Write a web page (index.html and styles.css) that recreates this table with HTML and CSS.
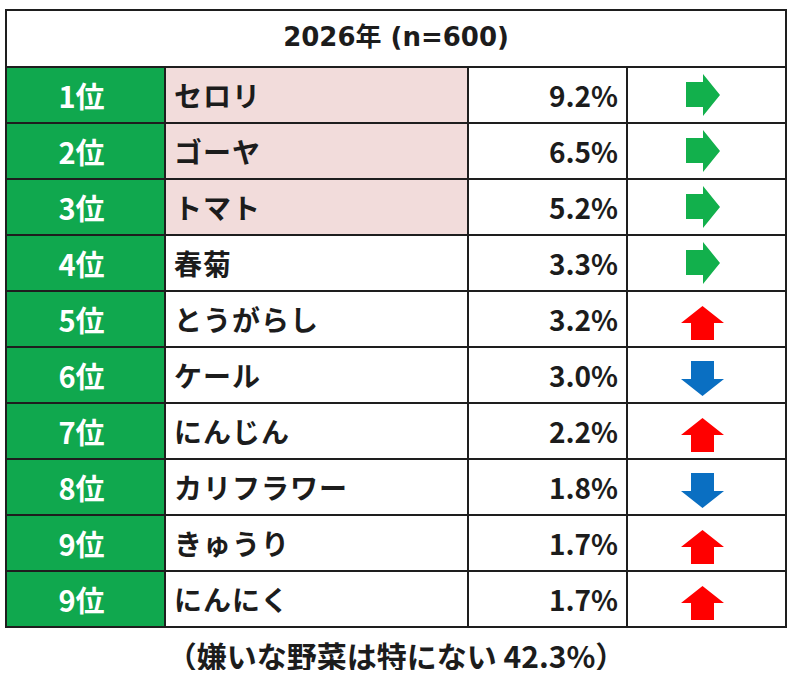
FILE: index.html
```html
<!DOCTYPE html>
<html lang="ja">
<head>
<meta charset="utf-8">
<link rel="stylesheet" href="styles.css">
</head>
<body>
<div class="page">
  <div class="table">
    <div class="head">2026年 (n=600)</div>

    <div class="rank">1位</div><div class="name hl">セロリ</div><div class="pct">9.2%</div>
    <div class="trend"><svg class="ar-right" viewBox="0 0 34 42"><polygon points="0,8 17,8 17,0 34,21 17,42 17,33 0,33"/></svg></div>

    <div class="rank">2位</div><div class="name hl">ゴーヤ</div><div class="pct">6.5%</div>
    <div class="trend"><svg class="ar-right" viewBox="0 0 34 42"><polygon points="0,8 17,8 17,0 34,21 17,42 17,33 0,33"/></svg></div>

    <div class="rank">3位</div><div class="name hl">トマト</div><div class="pct">5.2%</div>
    <div class="trend"><svg class="ar-right" viewBox="0 0 34 42"><polygon points="0,8 17,8 17,0 34,21 17,42 17,33 0,33"/></svg></div>

    <div class="rank">4位</div><div class="name">春菊</div><div class="pct">3.3%</div>
    <div class="trend"><svg class="ar-right" viewBox="0 0 34 42"><polygon points="0,8 17,8 17,0 34,21 17,42 17,33 0,33"/></svg></div>

    <div class="rank">5位</div><div class="name">とうがらし</div><div class="pct">3.2%</div>
    <div class="trend"><svg class="ar-up" viewBox="0 0 43 34"><polygon points="21.5,0 43,17 33,17 33,34 10,34 10,17 0,17"/></svg></div>

    <div class="rank">6位</div><div class="name">ケール</div><div class="pct">3.0%</div>
    <div class="trend"><svg class="ar-down" viewBox="0 0 43 35"><polygon points="10,0 33,0 33,18 43,18 21.5,35 0,18 10,18"/></svg></div>

    <div class="rank">7位</div><div class="name">にんじん</div><div class="pct">2.2%</div>
    <div class="trend"><svg class="ar-up" viewBox="0 0 43 34"><polygon points="21.5,0 43,17 33,17 33,34 10,34 10,17 0,17"/></svg></div>

    <div class="rank">8位</div><div class="name">カリフラワー</div><div class="pct">1.8%</div>
    <div class="trend"><svg class="ar-down" viewBox="0 0 43 35"><polygon points="10,0 33,0 33,18 43,18 21.5,35 0,18 10,18"/></svg></div>

    <div class="rank">9位</div><div class="name">きゅうり</div><div class="pct">1.7%</div>
    <div class="trend"><svg class="ar-up" viewBox="0 0 43 34"><polygon points="21.5,0 43,17 33,17 33,34 10,34 10,17 0,17"/></svg></div>

    <div class="rank">9位</div><div class="name">にんにく</div><div class="pct">1.7%</div>
    <div class="trend"><svg class="ar-up" viewBox="0 0 43 34"><polygon points="21.5,0 43,17 33,17 33,34 10,34 10,17 0,17"/></svg></div>
  </div>
  <div class="note">（嫌いな野菜は特にない 42.3%）</div>
</div>
</body>
</html>
```

FILE: styles.css
```css
html, body {
  margin: 0;
  padding: 0;
  background: #ffffff;
}
.page {
  padding: 9px 0 0 5px;
  width: 782px;
  font-family: "Noto Sans CJK JP", "Noto Sans", sans-serif;
  font-weight: 700;
  color: #1c1c1c;
}
.table {
  display: grid;
  grid-template-columns: 157px 301px 157px 157px;
  grid-template-rows: 55px repeat(10, 54px);
  gap: 2px;
  padding: 2px;
  background: #1e1e1e;
}
.table > div {
  background: #ffffff;
  display: flex;
  align-items: center;
  font-size: 28px;
  line-height: 1;
}
.table > .head {
  grid-column: 1 / -1;
  justify-content: center;
  font-family: "DejaVu Sans", "Noto Sans CJK JP", sans-serif;
  font-size: 26px;
  padding-bottom: 4px;
}
.table > .rank {
  background: #10a84e;
  color: #ffffff;
  justify-content: center;
  font-size: 29px;
  padding-right: 8px;
}
.table > .name {
  padding-left: 8px;
  letter-spacing: 1px;
}
.table > .name.hl {
  background: #f2dcdb;
}
.table > .pct {
  justify-content: flex-end;
  padding-right: 8px;
}
.table > .trend {
  justify-content: center;
  padding-right: 8px;
}
.ar-right {
  width: 34px;
  height: 42px;
  fill: #12b04c;
}
.ar-up {
  width: 43px;
  height: 34px;
  fill: #ff0000;
  margin-top: 8px;
}
.ar-down {
  width: 43px;
  height: 35px;
  fill: #0a6fc2;
  margin-top: 6px;
}
.note {
  text-align: center;
  font-size: 30px;
  line-height: 1;
  padding-top: 12px;
}
```
